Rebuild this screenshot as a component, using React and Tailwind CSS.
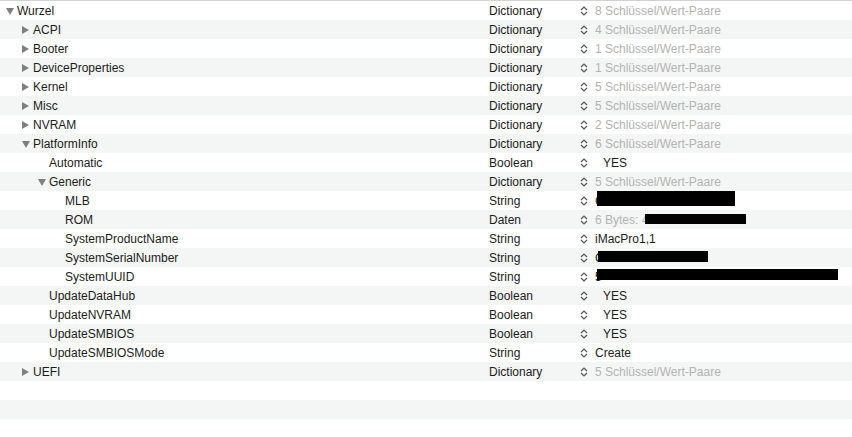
import React from "react";

const rows = [
  { name: "Wurzel", level: 0, tri: "down", type: "Dictionary", value: "8 Schlüssel/Wert-Paare", muted: true },
  { name: "ACPI", level: 1, tri: "right", type: "Dictionary", value: "4 Schlüssel/Wert-Paare", muted: true },
  { name: "Booter", level: 1, tri: "right", type: "Dictionary", value: "1 Schlüssel/Wert-Paare", muted: true },
  { name: "DeviceProperties", level: 1, tri: "right", type: "Dictionary", value: "1 Schlüssel/Wert-Paare", muted: true },
  { name: "Kernel", level: 1, tri: "right", type: "Dictionary", value: "5 Schlüssel/Wert-Paare", muted: true },
  { name: "Misc", level: 1, tri: "right", type: "Dictionary", value: "5 Schlüssel/Wert-Paare", muted: true },
  { name: "NVRAM", level: 1, tri: "right", type: "Dictionary", value: "2 Schlüssel/Wert-Paare", muted: true },
  { name: "PlatformInfo", level: 1, tri: "down", type: "Dictionary", value: "6 Schlüssel/Wert-Paare", muted: true },
  { name: "Automatic", level: 2, type: "Boolean", value: "YES", bool: true },
  { name: "Generic", level: 2, tri: "down", type: "Dictionary", value: "5 Schlüssel/Wert-Paare", muted: true },
  { name: "MLB", level: 3, type: "String", value: "C", bar: "mlb" },
  { name: "ROM", level: 3, type: "Daten", value: "6 Bytes: 4", muted: true, bar: "rom" },
  { name: "SystemProductName", level: 3, type: "String", value: "iMacPro1,1" },
  { name: "SystemSerialNumber", level: 3, type: "String", value: "C", bar: "serial" },
  { name: "SystemUUID", level: 3, type: "String", value: "5", bar: "uuid" },
  { name: "UpdateDataHub", level: 2, type: "Boolean", value: "YES", bool: true },
  { name: "UpdateNVRAM", level: 2, type: "Boolean", value: "YES", bool: true },
  { name: "UpdateSMBIOS", level: 2, type: "Boolean", value: "YES", bool: true },
  { name: "UpdateSMBIOSMode", level: 2, type: "String", value: "Create" },
  { name: "UEFI", level: 1, tri: "right", type: "Dictionary", value: "5 Schlüssel/Wert-Paare", muted: true },
];

const indentCls = ["pl-0", "pl-[16px]", "pl-[32px]", "pl-[48px]"];

function Triangle({ dir }) {
  if (dir === "down") {
    return (
      <svg width="8" height="7" viewBox="0 0 8 7" className="block">
        <polygon points="0,0 8,0 4,7" fill="#7f7f7f" />
      </svg>
    );
  }
  return (
    <svg width="7" height="8" viewBox="0 0 7 8" className="block">
      <polygon points="0,0 7,4 0,8" fill="#7f7f7f" />
    </svg>
  );
}

function Chevrons() {
  return (
    <svg width="8" height="10" viewBox="0 0 8 10" className="block">
      <path d="M1 4 L4 1 L7 4" fill="none" stroke="#555555" strokeWidth="1.2" />
      <path d="M1 6 L4 9 L7 6" fill="none" stroke="#555555" strokeWidth="1.2" />
    </svg>
  );
}

function Bar({ kind }) {
  if (kind === "mlb") return <div className="absolute left-[17px] -top-px w-[138px] h-[15px] bg-black" />;
  if (kind === "rom") return <div className="absolute left-[65px] top-[3px] w-[101px] h-[10px] bg-black" />;
  if (kind === "serial") return <div className="absolute left-[18px] top-[2px] w-[110px] h-[11px] bg-black" />;
  if (kind === "uuid") return <div className="absolute left-[17px] top-[1px] w-[241px] h-[11px] bg-black" />;
  return null;
}

function Row({ r, i }) {
  const bg = i % 2 === 1 ? "bg-[#f4f5f5]" : "bg-white";
  return (
    <div className={`flex h-[19px] pt-[1px] items-center leading-[18px] ${bg}`}>
      <div className={`w-[489px] flex items-center ${indentCls[r.level]}`}>
        <div className="w-[17px] flex items-center pl-[6px]">
          {r.tri ? <Triangle dir={r.tri} /> : null}
        </div>
        <span className="text-[#1c1c1c]">{r.name}</span>
      </div>
      <div className="w-[91px] text-[#1c1c1c]">{r.type}</div>
      <div className="relative flex-1 flex items-center h-full">
        <Chevrons />
        <span
          className={`${r.bool ? "ml-[15px]" : "ml-[7px]"} ${r.muted ? "text-[#b3b3b3]" : "text-[#1c1c1c]"}`}
        >
          {r.value}
        </span>
        {r.bar ? <Bar kind={r.bar} /> : null}
      </div>
    </div>
  );
}

export default function App() {
  return (
    <div
      className="w-[852px] h-[437px] overflow-hidden bg-white border-t border-[#d2d2d2] text-[12px]"
      style={{ fontFamily: '"Liberation Sans", Arial, sans-serif' }}
    >
      {rows.map((r, i) => (
        <Row key={i} r={r} i={i} />
      ))}
      <div className="h-[19px] bg-white" />
      <div className="h-[19px] bg-[#f4f5f5]" />
      <div className="h-[19px] bg-white" />
    </div>
  );
}
